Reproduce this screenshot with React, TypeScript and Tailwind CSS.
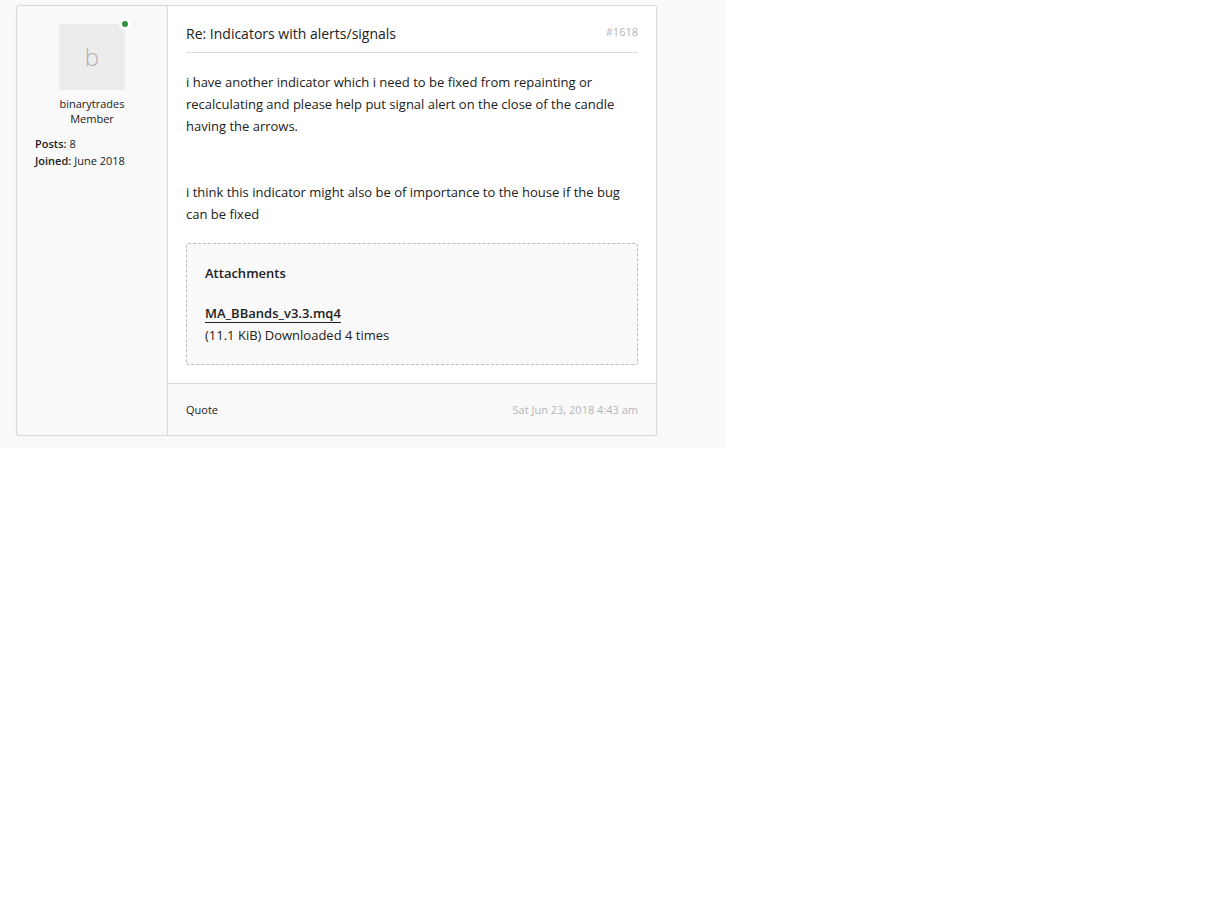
type Attachment = {
  name: string;
  href: string;
  info: string;
};

const post = {
  number: '#1618',
  title: 'Re: Indicators with alerts/signals',
  date: 'Sat Jun 23, 2018 4:43 am',
  paragraphs: [
    'i have another indicator which i need to be fixed from repainting or recalculating and please help put signal alert on the close of the candle having the arrows.',
    'i think this indicator might also be of importance to the house if the bug can be fixed',
  ],
};

const author = {
  name: 'binarytrades',
  rank: 'Member',
  stats: [
    { label: 'Posts:', value: '8' },
    { label: 'Joined:', value: 'June 2018' },
  ],
};

const attachments: Attachment[] = [
  { name: 'MA_BBands_v3.3.mq4', href: '#attachment', info: '(11.1 KiB) Downloaded 4 times' },
];

function Avatar({ name }: { name: string }) {
  return (
    <a
      href="#profile"
      aria-label={`${name} is online`}
      className="relative flex size-[66px] items-center justify-center rounded-xs bg-[#ececec] text-2xl font-light text-[#b0b0b0]"
    >
      {name[0]}
      <span className="absolute -top-1.5 -right-1.5 size-3 rounded-full border-3 border-white bg-[#388e3c]" />
    </a>
  );
}

function AuthorPanel() {
  return (
    <aside className="w-[151px] shrink-0 border-r border-[#dadada] p-[18px] text-[11px]">
      <div className="flex flex-col items-center leading-[15px]">
        <Avatar name={author.name} />
        <a href="#profile" className="mt-1.5">
          {author.name}
        </a>
        <span>{author.rank}</span>
      </div>
      <dl className="mt-[9px] leading-[17px]">
        {author.stats.map((s) => (
          <div key={s.label} className="flex gap-[3px]">
            <dt className="font-semibold">{s.label}</dt>
            <dd>{s.value}</dd>
          </div>
        ))}
      </dl>
    </aside>
  );
}

function Attachments({ items }: { items: Attachment[] }) {
  return (
    <section className="mt-[18px] rounded-xs border border-dashed border-[#bdbdbd] bg-[#f9f9f9] p-[18px]">
      <h3 className="font-semibold">Attachments</h3>
      {items.map((a) => (
        <div key={a.name} className="mt-[18px]">
          <div>
            <a href={a.href} className="border-b border-[#212121] font-semibold">
              {a.name}
            </a>
          </div>
          <p>{a.info}</p>
        </div>
      ))}
    </section>
  );
}

export default function App() {
  return (
    <main className="w-full max-w-[726px] bg-[#fafafa] pt-[5px] pr-[69px] pb-3 pl-4 font-['Open_Sans',sans-serif] text-[#212121]">
      <article className="flex rounded-xs border border-[#dadada] bg-[#f9f9f9] shadow-[0_0_6px_rgba(0,0,0,0.03)]">
        <AuthorPanel />
        <div className="flex min-w-0 flex-1 flex-col">
          <div className="flex-1 bg-white p-[18px]">
            <header className="flex items-start justify-between border-b border-[#dadada] pb-2">
              <h2 className="text-sm leading-5">{post.title}</h2>
              <a href="#p1618" className="text-[11px] leading-4 text-[#b5b5b5]">
                {post.number}
              </a>
            </header>
            <div className="pt-[18px] text-[13px] leading-[22px]">
              <div className="flex flex-col gap-11">
                {post.paragraphs.map((text) => (
                  <p key={text}>{text}</p>
                ))}
              </div>
              <Attachments items={attachments} />
            </div>
          </div>
          <footer className="flex items-center justify-between border-t border-[#dadada] p-[18px] text-[11px] leading-[15px]">
            <button type="button">Quote</button>
            <time dateTime="2018-06-23T04:43" className="text-[#b5b5b5]">
              {post.date}
            </time>
          </footer>
        </div>
      </article>
    </main>
  );
}
